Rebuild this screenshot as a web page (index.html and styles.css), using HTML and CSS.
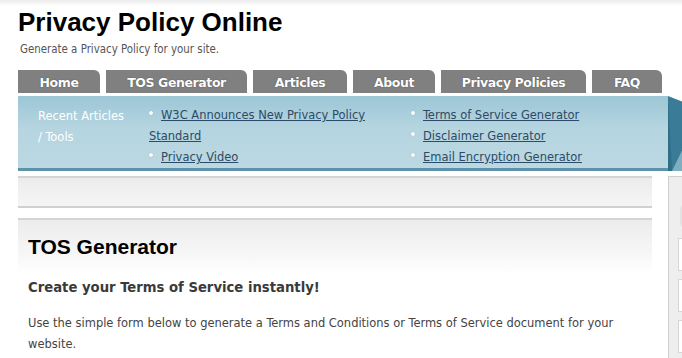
FILE: index.html
```html
<!DOCTYPE html>
<html lang="en">
<head>
<meta charset="utf-8">
<title>Privacy Policy Online - TOS Generator</title>
<link rel="stylesheet" href="styles.css">
</head>
<body>
<div class="topshade"></div>
<div class="page">
  <header class="masthead">
    <h1 class="site-title">Privacy Policy Online</h1>
    <p class="tagline">Generate a Privacy Policy for your site.</p>
  </header>

  <nav class="tabs">
    <a class="tab tab-home" href="#">Home</a>
    <a class="tab tab-tos" href="#">TOS Generator</a>
    <a class="tab tab-articles" href="#">Articles</a>
    <a class="tab tab-about" href="#">About</a>
    <a class="tab tab-policies" href="#">Privacy Policies</a>
    <a class="tab tab-faq" href="#">FAQ</a>
  </nav>

  <div class="subnav">
    <div class="subnav-label">Recent Articles<br>/ Tools</div>
    <ul class="subnav-list subnav-list-a">
      <li><a href="#">W3C Announces New Privacy Policy Standard</a></li>
      <li><a href="#">Privacy Video</a></li>
    </ul>
    <ul class="subnav-list subnav-list-b">
      <li><a href="#">Terms of Service Generator</a></li>
      <li><a href="#">Disclaimer Generator</a></li>
      <li><a href="#">Email Encryption Generator</a></li>
    </ul>
    <svg class="subnav-fold" width="20" height="75" viewBox="0 0 20 75" aria-hidden="true">
      <polygon points="0,0 20,8 20,75 0,75" fill="#3a7c97"/>
      <polygon points="20,42 20,75 4,75" fill="#7eaebf"/>
      <polygon points="0,0 4,75 0,75" fill="#2f6e88"/>
    </svg>
  </div>

  <div class="layout">
    <main class="main">
      <div class="crumbbar"></div>
      <section class="article">
        <div class="article-head">
          <h2 class="article-title">TOS Generator</h2>
        </div>
        <h3 class="article-lead">Create your Terms of Service instantly!</h3>
        <p class="article-text">Use the simple form below to generate a Terms and Conditions or Terms of Service document for your website.</p>
      </section>
    </main>
    <aside class="sidebar">
      <div class="sidebar-search"></div>
      <div class="sidebar-box"></div>
      <div class="sidebar-box"></div>
      <div class="sidebar-box"></div>
    </aside>
  </div>
</div>
</body>
</html>
```

FILE: styles.css
```css
* { box-sizing: border-box; }

html, body {
  margin: 0;
  padding: 0;
  background: #fff;
}

body {
  font-family: "DejaVu Sans Condensed", "DejaVu Sans", sans-serif;
  color: #444;
  overflow: hidden;
}

.topshade {
  height: 6px;
  background: linear-gradient(#ececec, #fff);
}

.page {
  padding-left: 18px;
}

.masthead {
  height: 64px;
}

.site-title {
  margin: 0;
  padding-top: 1px;
  font-family: "Liberation Sans", Arial, sans-serif;
  font-weight: bold;
  font-size: 26px;
  line-height: 30px;
  color: #000;
}

.tagline {
  margin: 6px 0 0 2px;
  font-size: 11.4px;
  line-height: 13px;
  color: #555;
}

.tabs {
  display: grid;
  grid-template-columns: 82px 141px 94px 82px 145px 70px;
  column-gap: 6px;
  height: 23px;
}

.tab {
  display: flex;
  align-items: center;
  justify-content: center;
  background: #808080;
  border-top-right-radius: 6px;
  color: #fff;
  font-family: "DejaVu Sans", sans-serif;
  font-weight: bold;
  font-size: 12.5px;
  letter-spacing: -0.4px;
  text-decoration: none;
  text-shadow: 0 0 1px #333;
  padding-top: 1px;
}

.subnav {
  position: relative;
  margin-top: 3px;
  margin-right: 14px;
  height: 75px;
  display: flex;
  background: linear-gradient(#9dc6d6, #b5d5e0 45%, #bcd8e2);
  border-bottom: 3px solid #5e92aa;
  padding-top: 8px;
}

.subnav-label {
  width: 131px;
  padding-left: 20px;
  padding-top: 1px;
  font-size: 12.75px;
  line-height: 21px;
  color: #fff;
}

.subnav-list {
  list-style: none;
  margin: 0;
  padding: 0;
  font-size: 12.75px;
  line-height: 21px;
}

.subnav-list-a {
  width: 262px;
}

.subnav-list li::before {
  content: "";
  display: inline-block;
  width: 4px;
  height: 4px;
  border-radius: 50%;
  background: #fff;
  box-shadow: 0 0 1px #7e9fae;
  margin: 0 8px 0 0;
  vertical-align: 4px;
}

.subnav-list a {
  color: #2c4b66;
  text-decoration: underline;
}

.subnav-fold {
  position: absolute;
  left: 100%;
  top: 0;
}

.layout {
  display: flex;
  margin-top: 5px;
  gap: 16px;
  align-items: flex-start;
}

.main {
  width: 634px;
  flex: none;
}

.crumbbar {
  height: 32px;
  border-top: 2px solid #d4d4d4;
  border-bottom: 2px solid #d0d0d0;
  background: linear-gradient(#ececec, #f5f5f5);
}

.article {
  margin-top: 10px;
}

.article-head {
  border-top: 2px solid #d4d4d4;
  background: linear-gradient(#ececec, #f6f6f6 60%, #fff);
  height: 56px;
  padding: 14px 0 0 10px;
}

.article-title {
  margin: 0;
  font-family: "Liberation Sans", Arial, sans-serif;
  font-weight: bold;
  font-size: 21px;
  line-height: 25px;
  color: #000;
}

.article-lead {
  margin: 3px 0 0 10px;
  font-size: 14.7px;
  line-height: 20px;
  font-weight: bold;
  color: #3a3a3a;
}

.article-text {
  margin: 15px 0 0 10px;
  font-size: 12.75px;
  line-height: 21px;
  color: #444;
}

.sidebar {
  width: 40px;
  flex: none;
  height: 200px;
  border: 1px solid #cfcfcf;
  border-right: none;
  background: #eeeeee;
  padding: 25px 0 0 9px;
}

.sidebar-search {
  height: 28px;
  background: #e2e2e2;
  border-radius: 8px 0 0 8px;
  margin-left: 2px;
}

.sidebar-box {
  height: 33px;
  margin-top: 8px;
  background: #fff;
  border: 1px solid #d6d6d6;
  border-right: none;
}
```
